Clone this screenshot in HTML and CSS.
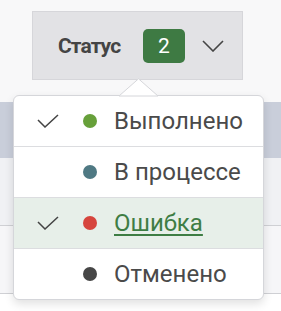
FILE: index.html
```html
<!DOCTYPE html>
<html lang="ru">
<head>
  <meta charset="UTF-8">
  <meta name="viewport" content="width=device-width, initial-scale=1.0">
  <title>Фильтр по статусу</title>
  <link rel="stylesheet" href="styles.css">
</head>
<body>
  <div class="page">
    <div class="toolbar">
      <button class="filter-btn" type="button">
        <span class="filter-label">Статус</span>
        <span class="badge">2</span>
        <svg class="chevron" width="22" height="12" viewBox="0 0 22 12">
          <polyline points="1,1 11,11 21,1" fill="none" stroke="#454545" stroke-width="1.6"/>
        </svg>
      </button>
    </div>

    <!-- таблица под выпадающим списком -->
    <div class="table">
      <div class="table-head"></div>
      <div class="table-row"></div>
      <div class="table-row"></div>
    </div>

    <div class="dropdown">
      <svg class="caret" width="42" height="19" viewBox="0 0 42 19">
        <polygon points="1,18 20.5,0.8 40,18" fill="#fff" stroke="#d5d6da" stroke-width="1"/>
      </svg>
      <ul class="options">
        <li class="option">
          <svg class="check" width="22" height="14" viewBox="0 0 22 14"><polyline points="1,6 8,13 21,1" fill="none" stroke="#444" stroke-width="1.5"/></svg>
          <span class="dot dot-done"></span>
          <span class="option-text">Выполнено</span>
        </li>
        <li class="option">
          <span class="check"></span>
          <span class="dot dot-progress"></span>
          <span class="option-text">В процессе</span>
        </li>
        <li class="option selected">
          <svg class="check" width="22" height="14" viewBox="0 0 22 14"><polyline points="1,6 8,13 21,1" fill="none" stroke="#444" stroke-width="1.5"/></svg>
          <span class="dot dot-error"></span>
          <span class="option-text">Ошибка</span>
        </li>
        <li class="option">
          <span class="check"></span>
          <span class="dot dot-cancel"></span>
          <span class="option-text">Отменено</span>
        </li>
      </ul>
    </div>
  </div>
</body>
</html>
```

FILE: styles.css
```css
body {
  margin: 0;
  font-family: Roboto, "Noto Sans", sans-serif;
  color: #4a4a4a;
  background: #fff;
}
.page {
  position: relative;
  width: 281px;
  height: 311px;
  overflow: hidden;
}
.toolbar {
  height: 102px;
  padding: 11px 0 0 32px;
  box-sizing: border-box;
  background: #f8f8f9;
}
.filter-btn {
  display: flex;
  align-items: center;
  width: 211px;
  height: 69px;
  padding: 0 18px 0 25px;
  box-sizing: border-box;
  background: #e2e2e5;
  border: 1px solid #d6d6da;
  font-family: inherit;
  color: #444;
}
.filter-label {
  font-size: 21px;
  font-weight: 700;
  letter-spacing: -0.9px;
}
.badge {
  margin-left: auto;
  width: 42px;
  height: 34px;
  line-height: 34px;
  border-radius: 5px;
  background: #3e7a43;
  color: #fff;
  font-size: 21px;
  text-align: center;
}
.chevron {
  margin-left: 17px;
}
.table-head {
  height: 56px;
  background: #c9ceda;
}
.table-row {
  height: 67px;
  background: #f0f1f4;
  border-bottom: 1px solid #cfd0d4;
}
.table-row + .table-row {
  background: #f6f6f8;
}
.dropdown {
  position: absolute;
  left: 13px;
  top: 95px;
  width: 249px;
  background: #fff;
  border: 1px solid #d5d6da;
  border-radius: 6px;
  box-shadow: 0 4px 10px rgba(0, 0, 0, 0.12);
}
.caret {
  position: absolute;
  left: 104px;
  top: -18px;
}
.options {
  list-style: none;
  margin: 0;
  padding: 0;
}
.option {
  display: flex;
  align-items: center;
  height: 50px;
  padding-left: 23px;
  font-size: 24px;
}
.option + .option {
  border-top: 1px solid #dcdde0;
}
.option:last-child {
  border-radius: 0 0 6px 6px;
}
.check {
  width: 22px;
  height: 14px;
  margin-right: 24px;
}
.dot {
  width: 14px;
  height: 14px;
  border-radius: 50%;
  margin-right: 17px;
}
.dot-done { background: #67a03a; }
.dot-progress { background: #4f7983; }
.dot-error { background: #d6453d; }
.dot-cancel { background: #464646; }
.selected {
  background: #e7efe9;
}
.selected .option-text {
  color: #3e7d44;
  text-decoration: underline;
  text-decoration-thickness: 2px;
  text-underline-offset: 3px;
}
```
